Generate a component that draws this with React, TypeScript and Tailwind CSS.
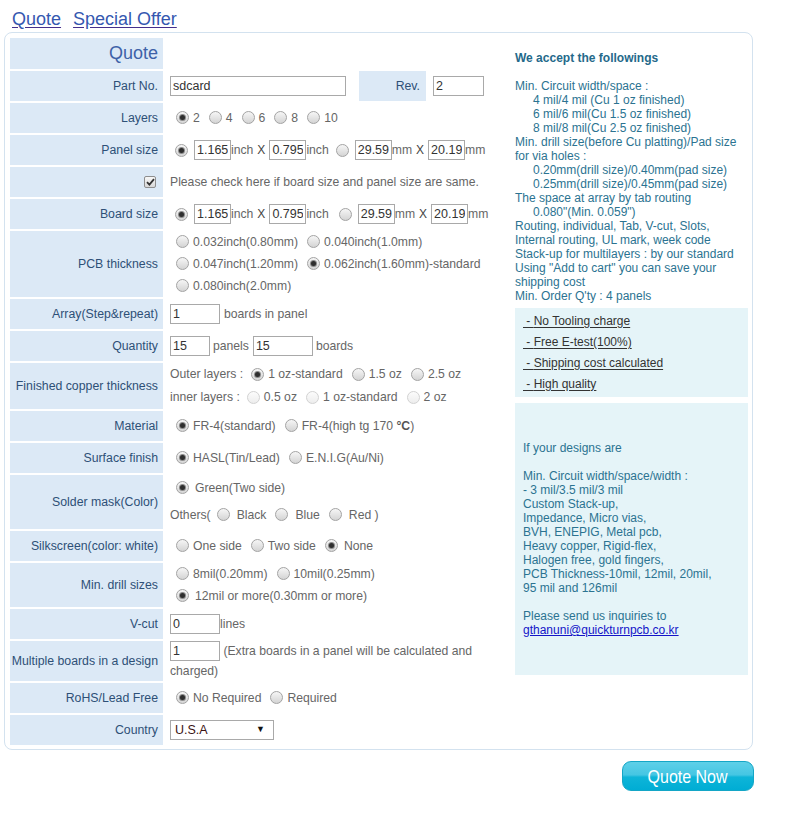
import React from 'react';
import clsx from 'clsx';

// Grey "classic" radio as the old browser draws it
const Radio: React.FC<{ checked?: boolean; disabled?: boolean; className?: string }> = ({
  checked,
  disabled,
  className = 'ml-[6px] mr-[4px]',
}) => (
  <span
    className={clsx(
      'inline-flex w-[13px] h-[13px] rounded-full border items-center justify-center shrink-0',
      disabled
        ? 'border-[#d2d2d2] bg-[linear-gradient(#fcfcfc,#ededed)]'
        : 'border-[#a3a3a3] bg-[linear-gradient(#f6f6f6,#d4d4d4)]',
      className
    )}
  >
    {checked && <span className="w-[5px] h-[5px] rounded-full bg-[#2e2e2e] shadow-[0_0_0_1px_#8a8a8a]" />}
  </span>
);

const Opt: React.FC<{ checked?: boolean; disabled?: boolean; children: React.ReactNode; gap?: string }> = ({
  checked,
  disabled,
  children,
  gap = 'mr-[3px]',
}) => (
  <span className={clsx('inline-flex items-center whitespace-nowrap', gap)}>
    <Radio checked={checked} disabled={disabled} />
    <span>{children}</span>
  </span>
);

const Box: React.FC<{ value: string; className?: string }> = ({ value, className = 'w-[37px]' }) => (
  <input
    readOnly
    value={value}
    className={clsx(
      'h-[20px] border border-[#a9a9a9] bg-white px-[2px] text-[12.5px] text-[#333] outline-none',
      className
    )}
  />
);

const Times = () => <span className="mx-[4px] text-[12px] text-[#444]">X</span>;

const Row: React.FC<{ label: React.ReactNode; h: string; children?: React.ReactNode }> = ({ label, h, children }) => (
  <div className={clsx('flex gap-[2px]', h)}>
    <div className="w-[153px] shrink-0 bg-[#dce9f6] flex items-center justify-end pr-[5px] text-[12.3px] text-[#2e5077] whitespace-nowrap">
      {label}
    </div>
    <div className="flex-1 pl-[5px] flex items-center text-[12.2px] text-[#666]">{children}</div>
  </div>
);

const SizeRow: React.FC<{ gap2?: string }> = ({ gap2 = 'ml-[7px] mr-[6px]' }) => (
  <div className="flex items-center">
    <Radio checked className="ml-[5px] mr-[6px]" />
    <Box value="1.165" />
    <span>inch</span>
    <Times />
    <Box value="0.795" />
    <span>inch</span>
    <Radio className={gap2} />
    <Box value="29.59" />
    <span>mm</span>
    <Times />
    <Box value="20.19" />
    <span>mm</span>
  </div>
);

const acceptLines: [string, boolean][] = [
  ['Min. Circuit width/space :', false],
  ['4 mil/4 mil (Cu 1 oz finished)', true],
  ['6 mil/6 mil(Cu 1.5 oz finished)', true],
  ['8 mil/8 mil(Cu 2.5 oz finished)', true],
  ['Min. drill size(before Cu platting)/Pad size', false],
  ['for via holes :', false],
  ['0.20mm(drill size)/0.40mm(pad size)', true],
  ['0.25mm(drill size)/0.45mm(pad size)', true],
  ['The space at array by tab routing', false],
  ['0.080"(Min. 0.059")', true],
  ['Routing, individual, Tab, V-cut, Slots,', false],
  ['Internal routing, UL mark, week code', false],
  ['Stack-up for multilayers : by our standard', false],
  ['Using "Add to cart" you can save your', false],
  ['shipping cost', false],
  ["Min. Order Q'ty : 4 panels", false],
];

const perks = ['No Tooling charge', 'Free E-test(100%)', 'Shipping cost calculated', 'High quality'];

const designLines = [
  'If your designs are',
  '',
  'Min. Circuit width/space/width :',
  '- 3 mil/3.5 mil/3 mil',
  'Custom Stack-up,',
  'Impedance, Micro vias,',
  'BVH, ENEPIG, Metal pcb,',
  'Heavy copper, Rigid-flex,',
  'Halogen free, gold fingers,',
  'PCB Thickness-10mil, 12mil, 20mil,',
  '95 mil and 126mil',
  '',
  'Please send us inquiries to',
];

export default function App() {
  return (
    <div className="min-h-[815px] bg-white font-['Liberation_Sans',Arial,sans-serif]">
      {/* Tabs */}
      <div className="h-[32px] pl-[12px] pt-[8px] text-[18px] leading-[22px] text-[#3558b0]">
        <a className="underline decoration-[#452f8c] underline-offset-[2px] mr-[12px]">Quote</a>
        <a className="underline decoration-[#452f8c] underline-offset-[2px]">Special Offer</a>
      </div>

      <div className="ml-[4px] w-[749px] border border-[#d3e2ef] rounded-[8px] pt-[5px] pb-[4px] pl-[5px] pr-[4px] flex">
        {/* Form */}
        <div className="w-[495px] shrink-0 flex flex-col gap-[2px]">
          <div className="flex gap-[2px] h-[31px]">
            <div className="w-[153px] bg-[#dce9f6] flex items-center justify-end pr-[5px] text-[18px] text-[#3e62a8]">
              Quote
            </div>
            <div className="flex-1" />
          </div>

          <Row label="Part No." h="h-[30px]">
            <div className="flex items-stretch h-full">
              <Box value="sdcard" className="w-[176px] self-center" />
              <div className="ml-[13px] w-[67px] bg-[#dce9f6] flex items-center justify-end pr-[6px] text-[12.3px] text-[#2e5077]">
                Rev.
              </div>
              <Box value="2" className="w-[51px] ml-[7px] self-center" />
            </div>
          </Row>

          <Row label="Layers" h="h-[30px]">
            <Opt checked>2</Opt>
            <Opt>4</Opt>
            <Opt>6</Opt>
            <Opt>8</Opt>
            <Opt>10</Opt>
          </Row>

          <Row label="Panel size" h="h-[30px]">
            <SizeRow />
          </Row>

          <Row
            label={
              <span className="mr-[2px] w-[12px] h-[12px] rounded-[2px] border border-[#8e8e8e] bg-[linear-gradient(#f8f8f8,#d8d8d8)] flex items-center justify-center">
                <svg width="9" height="8" viewBox="0 0 9 8">
                  <path d="M1 4.2 L3.4 6.6 L8 1.2" fill="none" stroke="#333" strokeWidth="1.8" />
                </svg>
              </span>
            }
            h="h-[30px]"
          >
            Please check here if board size and panel size are same.
          </Row>

          <Row label="Board size" h="h-[30px]">
            <SizeRow gap2="ml-[10px] mr-[6px]" />
          </Row>

          <Row label="PCB thickness" h="h-[66px]">
            <div className="flex flex-col">
              <div className="h-[22px] flex items-center">
                <Opt>0.032inch(0.80mm)</Opt>
                <Opt>0.040inch(1.0mm)</Opt>
              </div>
              <div className="h-[22px] flex items-center">
                <Opt>0.047inch(1.20mm)</Opt>
                <Opt checked>0.062inch(1.60mm)-standard</Opt>
              </div>
              <div className="h-[22px] flex items-center">
                <Opt>0.080inch(2.0mm)</Opt>
              </div>
            </div>
          </Row>

          <Row label="Array(Step&repeat)" h="h-[30px]">
            <Box value="1" className="w-[50px]" />
            <span className="ml-[4px]">boards in panel</span>
          </Row>

          <Row label="Quantity" h="h-[30px]">
            <Box value="15" className="w-[40px]" />
            <span className="ml-[3px] mr-[4px]">panels</span>
            <Box value="15" className="w-[60px]" />
            <span className="ml-[3px]">boards</span>
          </Row>

          <Row label="Finished copper thickness" h="h-[46px]">
            <div className="flex flex-col">
              <div className="h-[23px] flex items-center">
                <span className="mr-[2px]">Outer layers :</span>
                <Opt checked>1 oz-standard</Opt>
                <Opt>1.5 oz</Opt>
                <Opt>2.5 oz</Opt>
              </div>
              <div className="h-[23px] flex items-center">
                <span className="mr-[1px]">inner layers :</span>
                <Opt disabled>0.5 oz</Opt>
                <Opt disabled>1 oz-standard</Opt>
                <Opt disabled>2 oz</Opt>
              </div>
            </div>
          </Row>

          <Row label="Material" h="h-[30px]">
            <Opt checked>FR-4(standard)</Opt>
            <Opt>
              FR-4(high tg 170 <span className="font-bold text-[#555]">°C</span>)
            </Opt>
          </Row>

          <Row label="Surface finish" h="h-[30px]">
            <Opt checked>HASL(Tin/Lead)</Opt>
            <Opt>E.N.I.G(Au/Ni)</Opt>
          </Row>

          <Row label="Solder mask(Color)" h="h-[54px]">
            <div className="flex flex-col">
              <div className="h-[26px] flex items-center">
                <Opt checked>
                  <span className="ml-[2px]">Green(Two side)</span>
                </Opt>
              </div>
              <div className="h-[28px] flex items-center">
                <span>Others(</span>
                <Opt>
                  <span className="ml-[3px]">Black</span>
                </Opt>
                <Opt>
                  <span className="ml-[3px]">Blue</span>
                </Opt>
                <Opt>
                  <span className="ml-[3px]">Red )</span>
                </Opt>
              </div>
            </div>
          </Row>

          <Row label="Silkscreen(color: white)" h="h-[30px]">
            <Opt>One side</Opt>
            <Opt>Two side</Opt>
            <Opt checked>
              <span className="ml-[2px]">None</span>
            </Opt>
          </Row>

          <Row label="Min. drill sizes" h="h-[44px]">
            <div className="flex flex-col">
              <div className="h-[22px] flex items-center">
                <Opt>8mil(0.20mm)</Opt>
                <Opt>10mil(0.25mm)</Opt>
              </div>
              <div className="h-[22px] flex items-center">
                <Opt checked>
                  <span className="ml-[2px]">12mil or more(0.30mm or more)</span>
                </Opt>
              </div>
            </div>
          </Row>

          <Row label="V-cut" h="h-[30px]">
            <Box value="0" className="w-[50px]" />
            <span>lines</span>
          </Row>

          <Row label="Multiple boards in a design" h="h-[40px]">
            <div className="leading-[20px]">
              <Box value="1" className="w-[50px] align-middle h-[19px]" /> (Extra boards in a panel will be calculated
              and charged)
            </div>
          </Row>

          <Row label="RoHS/Lead Free" h="h-[30px]">
            <Opt checked>No Required</Opt>
            <Opt>Required</Opt>
          </Row>

          <Row label="Country" h="h-[30px]">
            <div className="w-[104px] h-[20px] border border-[#a9a9a9] bg-white flex items-center justify-between pl-[4px] pr-[8px]">
              <span className="text-[12.5px] text-[#3b1414]">U.S.A</span>
              <span className="text-[9px] text-[#111]">▼</span>
            </div>
          </Row>
        </div>

        {/* Info column */}
        <div className="ml-[10px] w-[233px] shrink-0 pt-[13px] text-[12px] leading-[14px] text-[#2b7391]">
          <div className="font-bold text-[#24698a]">We accept the followings</div>
          <div className="h-[14px]" />
          {acceptLines.map(([text, indent], i) => (
            <div key={i} className={clsx('whitespace-nowrap', indent && 'pl-[18px]')}>
              {text}
            </div>
          ))}

          <div className="mt-[5px] h-[89px] bg-[#e5f4f8] pl-[8px] pt-[2px] text-[#333]">
            {perks.map((p) => (
              <div key={p} className="h-[21px] flex items-center">
                <span className="underline underline-offset-[2px]">&nbsp;- {p}</span>
              </div>
            ))}
          </div>

          <div className="mt-[6px] h-[272px] bg-[#e5f4f8] pl-[8px] flex flex-col justify-center">
            {designLines.map((t, i) => (
              <div key={i} className="h-[14px] whitespace-nowrap">
                {t}
              </div>
            ))}
            <a className="h-[14px] text-[#1414c8] underline">gthanuni@quickturnpcb.co.kr</a>
          </div>
        </div>
      </div>

      <div className="w-[754px] flex justify-end mt-[11px]">
        <button className="w-[132px] h-[30px] rounded-[9px] border border-[#14a6c6] bg-[linear-gradient(to_bottom,#5ed0e8_0%,#45c6e3_46%,#0eb4d8_54%,#00add4_100%)] text-white flex items-center justify-center">
          <span className="inline-block text-[19px] leading-none scale-x-[0.84]">Quote Now</span>
        </button>
      </div>
    </div>
  );
}
